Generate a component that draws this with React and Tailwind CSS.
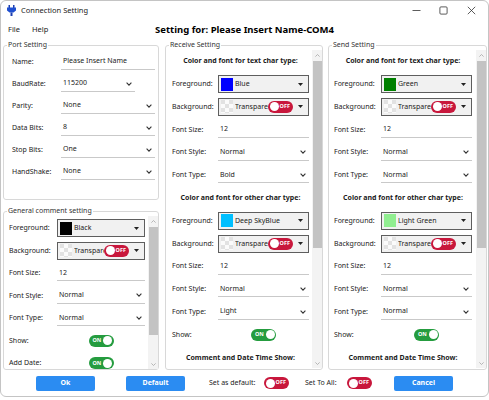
import React from 'react';

function Chevron() {
  return (
    <svg width="6" height="4" viewBox="0 0 6 4" className="shrink-0">
      <path d="M0.6 0.6 L3 3.1 L5.4 0.6" fill="none" stroke="#333" strokeWidth="1.1" />
    </svg>
  );
}

function Caret() {
  return (
    <svg width="5" height="3" viewBox="0 0 5 3" className="shrink-0">
      <path d="M0 0 H5 L2.5 3 Z" fill="#222" />
    </svg>
  );
}

function Checker() {
  return (
    <svg width="12" height="13" viewBox="0 0 12 13" className="shrink-0">
      <rect width="12" height="13" fill="#fbfbfb" />
      <rect x="0" y="0" width="4" height="4" fill="#e2e2e2" />
      <rect x="8" y="0" width="4" height="4" fill="#e2e2e2" />
      <rect x="4" y="4" width="4" height="4" fill="#e2e2e2" />
      <rect x="0" y="8" width="4" height="4" fill="#e2e2e2" />
      <rect x="8" y="8" width="4" height="4" fill="#e2e2e2" />
      <rect x="4" y="12" width="4" height="1" fill="#e2e2e2" />
    </svg>
  );
}

function Toggle({ on }) {
  if (on) {
    return (
      <div className="w-[25px] h-[12px] rounded-full bg-[#259c3f] flex items-center justify-between pl-[4px] pr-[1.5px] shrink-0">
        <span className="text-white text-[5.5px] font-bold leading-none">ON</span>
        <span className="w-[9px] h-[9px] rounded-full bg-white" />
      </div>
    );
  }
  return (
    <div className="w-[25px] h-[12px] rounded-full bg-[#c8173c] flex items-center justify-between pl-[1.5px] pr-[3px] shrink-0">
      <span className="w-[9px] h-[9px] rounded-full bg-white" />
      <span className="text-white text-[5.5px] font-bold leading-none">OFF</span>
    </div>
  );
}

function ColorBox({ color, text }) {
  return (
    <div className="flex-1 min-w-0 h-[18px] border-[1.5px] border-[#5e5e5e] bg-[#f1f1f1] flex items-center pl-[2px] pr-[5px]">
      {color ? (
        <span className="w-[12px] h-[13px] shrink-0" style={{ backgroundColor: color }} />
      ) : (
        <Checker />
      )}
      <span className="flex-1 min-w-0 ml-[2px] overflow-hidden whitespace-nowrap">{text}</span>
      {!color && <Toggle />}
      <span className="ml-[5px] flex shrink-0"><Caret /></span>
    </div>
  );
}

function Field({ value, chevron, w = 'flex-1 min-w-0' }) {
  return (
    <div className={`${w} h-[16px] border-b border-[#c9c9c9] flex items-center justify-between pl-[2px] pr-[3px]`}>
      <span className="whitespace-nowrap">{value}</span>
      {chevron && <Chevron />}
    </div>
  );
}

function Row({ label, lw, h, children }) {
  return (
    <div className={`flex items-center shrink-0 ${h}`}>
      <span className={`${lw} shrink-0 whitespace-nowrap`}>{label}</span>
      {children}
    </div>
  );
}

function ScrollBar({ thumb }) {
  return (
    <div className="w-[10px] shrink-0 flex flex-col bg-[#f3f3f3]">
      <div className="h-[10px] flex items-center justify-center">
        <svg width="5" height="3" viewBox="0 0 5 3"><path d="M0.4 2.6 L2.5 0.5 L4.6 2.6" fill="none" stroke="#a6a6a6" strokeWidth="0.8" /></svg>
      </div>
      <div className={`mx-[0.5px] mt-[1px] bg-[#c3c3c3] ${thumb}`} />
      <div className="flex-1" />
      <div className="h-[10px] flex items-center justify-center">
        <svg width="5" height="3" viewBox="0 0 5 3"><path d="M0.4 0.4 L2.5 2.5 L4.6 0.4" fill="none" stroke="#a6a6a6" strokeWidth="0.8" /></svg>
      </div>
    </div>
  );
}

function Legend({ children }) {
  return <legend className="ml-[3px] px-[1px] text-[7px] leading-[10px] text-[#333]">{children}</legend>;
}

function Heading({ children }) {
  return <div className="h-[22.8px] shrink-0 flex items-center justify-center font-bold whitespace-nowrap">{children}</div>;
}

function CharPanel({ legend, w, pl, pr, lw, fg1, c1, type1, fg2, c2, type2 }) {
  const rh = 'h-[22.8px]';
  return (
    <fieldset className={`${w} min-w-0 shrink-0 border border-[#d8d8d8] rounded-[3px]`}>
      <Legend>{legend}</Legend>
      <div className="h-[318px] flex">
        <div className={`flex-1 min-w-0 overflow-hidden flex flex-col ${pl} ${pr}`}>
          <Heading>Color and font for text char type:</Heading>
          <Row label="Foreground:" lw={lw} h={rh}><ColorBox color={c1} text={fg1} /></Row>
          <Row label="Background:" lw={lw} h={rh}><ColorBox text="Transparent" /></Row>
          <Row label="Font Size:" lw={lw} h={rh}><Field value="12" /></Row>
          <Row label="Font Style:" lw={lw} h={rh}><Field value="Normal" chevron /></Row>
          <Row label="Font Type:" lw={lw} h={rh}><Field value={type1} chevron /></Row>
          <Heading>Color and font for other char type:</Heading>
          <Row label="Foreground:" lw={lw} h={rh}><ColorBox color={c2} text={fg2} /></Row>
          <Row label="Background:" lw={lw} h={rh}><ColorBox text="Transparent" /></Row>
          <Row label="Font Size:" lw={lw} h={rh}><Field value="12" /></Row>
          <Row label="Font Style:" lw={lw} h={rh}><Field value="Normal" chevron /></Row>
          <Row label="Font Type:" lw={lw} h={rh}><Field value={type2} chevron /></Row>
          <Row label="Show:" lw={lw} h={rh}><div className="flex-1 flex justify-center"><Toggle on /></div></Row>
          <Heading>Comment and Date Time Show:</Heading>
        </div>
        <ScrollBar thumb="h-[187px]" />
      </div>
    </fieldset>
  );
}

export default function App() {
  const gh = 'h-[22.5px]';
  return (
    <div className="w-[489px] h-[400px] bg-white font-['Noto_Sans','Liberation_Sans',sans-serif] text-[7px] text-[#1b1b1b]">
      <div className="w-[489px] h-[397px] border border-[#c4c4c4] rounded-[6px] bg-white flex flex-col overflow-hidden">
        {/* title bar */}
        <div className="h-[19px] shrink-0 flex items-center pl-[6px]">
          <svg width="9" height="11" viewBox="0 0 9 11" className="shrink-0">
            <rect x="1.5" y="0" width="1.5" height="3" fill="#1d3fb0" />
            <rect x="6" y="0" width="1.5" height="3" fill="#1d3fb0" />
            <path d="M0 2.5 H9 V5.5 L6.5 7.5 H2.5 L0 5.5 Z" fill="#1f4fd0" />
            <rect x="3.5" y="7.5" width="2" height="3.5" fill="#1d3fb0" />
          </svg>
          <span className="ml-[5px] text-[7.5px] text-[#222]">Connection Setting</span>
          <div className="ml-auto flex items-center h-full">
            <div className="w-[27px] flex justify-center">
              <svg width="9" height="9" viewBox="0 0 9 9"><path d="M0.5 4.5 H8.5" stroke="#333" strokeWidth="0.8" /></svg>
            </div>
            <div className="w-[27px] flex justify-center">
              <svg width="9" height="9" viewBox="0 0 9 9"><rect x="0.9" y="0.9" width="7.2" height="7.2" rx="1" fill="none" stroke="#333" strokeWidth="0.8" /></svg>
            </div>
            <div className="w-[28px] flex justify-center mr-[3px]">
              <svg width="9" height="9" viewBox="0 0 9 9"><path d="M0.8 0.8 L8.2 8.2 M8.2 0.8 L0.8 8.2" stroke="#333" strokeWidth="0.8" /></svg>
            </div>
          </div>
        </div>

        {/* menu + title */}
        <div className="h-[20px] shrink-0 grid grid-cols-[1fr_auto_1fr] items-center">
          <div className="flex items-center pl-[7px] gap-[12px] text-[7.5px] text-[#222]">
            <span>File</span>
            <span>Help</span>
          </div>
          <div className="font-bold text-[9.5px] text-black">Setting for: Please Insert Name-COM4</div>
          <div />
        </div>

        {/* groups */}
        <div className="h-[330px] shrink-0 flex pl-[2px]">
          <div className="w-[156px] shrink-0 flex flex-col gap-[6px]">
            <fieldset className="min-w-0 border border-[#d8d8d8] rounded-[3px]">
              <Legend>Port Setting</Legend>
              <div className="h-[149px] flex flex-col pt-[1px] pl-[8px] pr-[3px]">
                <Row label="Name:" lw="w-[49px]" h="h-[22px]"><Field value="Please Insert Name" /></Row>
                <Row label="BaudRate:" lw="w-[49px]" h="h-[22px]"><Field value="115200" chevron w="w-[74px]" /></Row>
                <Row label="Parity:" lw="w-[49px]" h="h-[22px]"><Field value="None" chevron /></Row>
                <Row label="Data Bits:" lw="w-[49px]" h="h-[22px]"><Field value="8" chevron /></Row>
                <Row label="Stop Bits:" lw="w-[49px]" h="h-[22px]"><Field value="One" chevron /></Row>
                <Row label="HandShake:" lw="w-[49px]" h="h-[22px]"><Field value="None" chevron /></Row>
              </div>
            </fieldset>
            <fieldset className="min-w-0 border border-[#d8d8d8] rounded-[3px]">
              <Legend>General comment setting</Legend>
              <div className="h-[153px] flex">
                <div className="flex-1 min-w-0 overflow-hidden flex flex-col pt-[1px] pl-[5px] pr-[3px]">
                  <Row label="Foreground:" lw="w-[48px]" h={gh}><ColorBox color="#000000" text="Black" /></Row>
                  <Row label="Background:" lw="w-[48px]" h={gh}><ColorBox text="Transparent" /></Row>
                  <Row label="Font Size:" lw="w-[48px]" h={gh}><Field value="12" /></Row>
                  <Row label="Font Style:" lw="w-[48px]" h={gh}><Field value="Normal" chevron /></Row>
                  <Row label="Font Type:" lw="w-[48px]" h={gh}><Field value="Normal" chevron /></Row>
                  <Row label="Show:" lw="w-[48px]" h={gh}><div className="flex-1 flex justify-center"><Toggle on /></div></Row>
                  <Row label="Add Date:" lw="w-[48px]" h={gh}><div className="flex-1 flex justify-center"><Toggle on /></div></Row>
                </div>
                <ScrollBar thumb="h-[108px]" />
              </div>
            </fieldset>
          </div>

          <div className="ml-[6px] flex">
            <CharPanel legend="Receive Setting" w="w-[158px]" pl="pl-[6px]" pr="pr-[3px]" lw="w-[46px]"
              fg1="Blue" c1="#0000ff" type1="Bold" fg2="Deep SkyBlue" c2="#00bfff" type2="Light" />
          </div>
          <div className="ml-[5px] flex">
            <CharPanel legend="Send Setting" w="w-[159px]" pl="pl-[5px]" pr="pr-[4px]" lw="w-[47px]"
              fg1="Green" c1="#008000" type1="Normal" fg2="Light Green" c2="#90ee90" type2="Normal" />
            <div className="w-[3px]" />
          </div>
        </div>

        {/* bottom bar */}
        <div className="flex-1 flex items-center pl-[35px]">
          <button className="w-[59px] h-[15px] rounded-[2px] bg-[#2b8cf2] text-white font-bold text-[7px]">Ok</button>
          <button className="ml-[31px] w-[59px] h-[15px] rounded-[2px] bg-[#2b8cf2] text-white font-bold text-[7px]">Default</button>
          <span className="ml-[24px] w-[55px] text-[#222]">Set as default:</span>
          <Toggle />
          <span className="ml-[16px] w-[42px] text-[#222]">Set To All:</span>
          <Toggle />
          <button className="ml-[22px] w-[59px] h-[15px] rounded-[2px] bg-[#2b8cf2] text-white font-bold text-[7px]">Cancel</button>
        </div>
      </div>
    </div>
  );
}
